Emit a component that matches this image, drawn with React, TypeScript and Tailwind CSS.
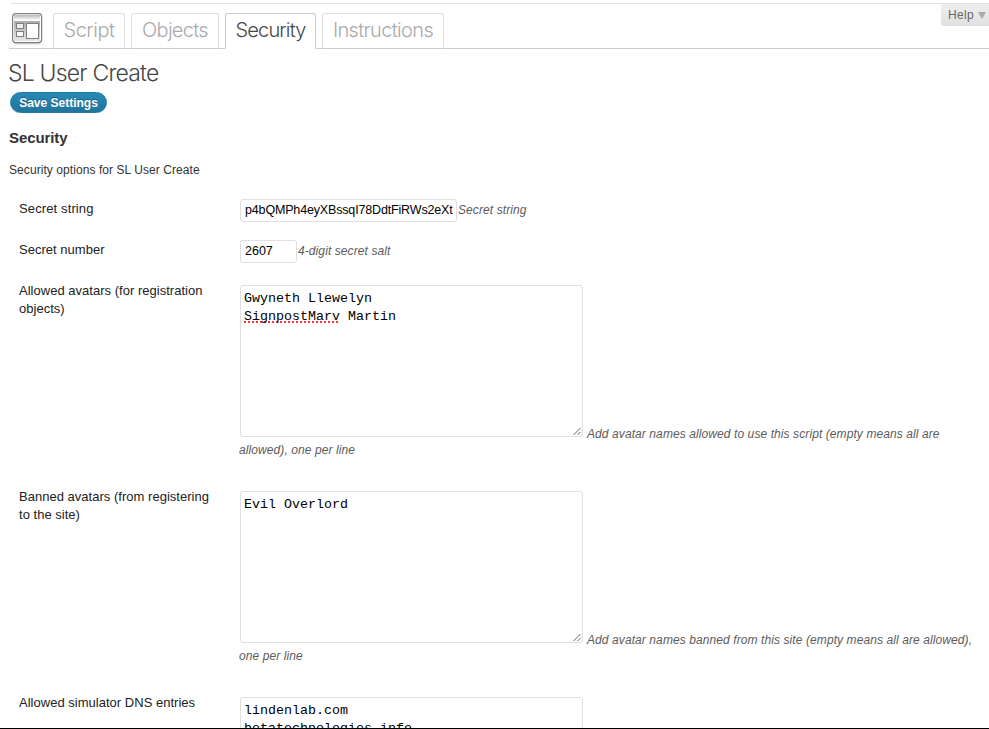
import type { ReactNode } from "react";

const light = "font-['Inter',sans-serif] font-light";

function Tab({ width, text, label, active = false }: { width: string; text: string; label: string; active?: boolean }) {
  return (
    <a
      className={`${light} ${width} ${text} relative flex h-[36px] shrink-0 justify-center whitespace-nowrap rounded-t-[3px] border pt-[3px] text-[20px] leading-[26px] ${
        active ? "border-[#ccc] border-b-white bg-white text-[#464646]" : "border-[#dfdfdf] border-b-[#ccc] text-[#aaa]"
      }`}
    >
      {label}
    </a>
  );
}

function LayoutIcon() {
  return (
    <svg width="32" height="34" viewBox="0 0 32 34" className="ml-[3px] mb-px shrink-0" fill="none">
      <defs>
        <linearGradient id="bar" x1="0" y1="0" x2="0" y2="1">
          <stop offset="0" stopColor="#b8b8b8" />
          <stop offset="1" stopColor="#fafafa" />
        </linearGradient>
        <linearGradient id="body" x1="0" y1="0" x2="0" y2="1">
          <stop offset="0" stopColor="#aaa" />
          <stop offset="1" stopColor="#e8e8e8" />
        </linearGradient>
      </defs>
      <path d="M2 30.5H28" stroke="#ddd" strokeWidth="2" />
      <rect x="0.6" y="0.6" width="29" height="29" rx="3" fill="#fff" stroke="#7d7d7d" strokeWidth="1.2" />
      <rect x="2" y="2" width="26" height="5" fill="url(#bar)" />
      <rect x="2" y="8" width="26" height="20" fill="url(#body)" />
      <rect x="4.5" y="10.5" width="7" height="5" fill="#eee" stroke="#808080" />
      <rect x="4.5" y="18.5" width="7" height="5" fill="#f8f8f8" stroke="#808080" />
      <rect x="14.5" y="10.5" width="12" height="15" fill="#fff" stroke="#808080" />
    </svg>
  );
}

function Row({ label, height, children }: { label: ReactNode; height: string; children: ReactNode }) {
  return (
    <div className={`flex ${height}`}>
      <div className="w-[230px] shrink-0 pl-[10px] pt-[2px] text-[13px] leading-[18px] tracking-[0.02px] text-[#222]">{label}</div>
      <div className="w-[750px] shrink-0">{children}</div>
    </div>
  );
}

const hint = "whitespace-nowrap text-[12px] italic leading-[16px] tracking-[0.09px] text-[#5c5c5c]";

function Area({ children }: { children?: ReactNode }) {
  return (
    <div className="relative h-[152px] w-[343px] shrink-0 overflow-hidden rounded-[3px] border border-[#dfdfdf] bg-white pl-[3px] pt-[4px] font-['Liberation_Mono',monospace] text-[13.333px] leading-[18px] text-black">
      {children}
      <svg width="9" height="9" viewBox="0 0 9 9" className="absolute bottom-0 right-0" stroke="#555" strokeWidth="0.9">
        <path d="M0.5 8L7.5 1M4.5 8L7.5 5" />
      </svg>
    </div>
  );
}

export default function App() {
  return (
    <div className="relative h-[729px] w-[989px] overflow-hidden bg-white font-['Liberation_Sans',Arial,sans-serif] text-[#333]">
      <div className="ml-[11px] mt-[3px] h-px bg-[#dfdfdf]" />
      <div className="absolute right-0 top-[4px] flex h-[22px] w-[48px] items-center rounded-bl-[3px] bg-gradient-to-b from-[#efefef] to-[#e0e0e0] pl-[7px] text-[12px] tracking-[0.3px] text-[#666]">
        Help
        <span className="ml-[4px] mt-px h-0 w-0 border-x-[4px] border-t-[7px] border-x-transparent border-t-[#aaa]" />
      </div>
      <div className="ml-[9px] flex h-[45px] items-end border-b border-[#ccc]">
        <LayoutIcon />
        <div className="-mb-px ml-[9px] flex">
          <Tab width="w-[72px]" text="tracking-[-0.5px]" label="Script" />
          <Tab width="ml-[6px] w-[88px]" text="tracking-[-0.7px]" label="Objects" />
          <Tab width="ml-[6px] w-[91px]" text="tracking-[-0.85px]" label="Security" active />
          <Tab width="ml-[6px] w-[122px]" text="tracking-[-0.65px]" label="Instructions" />
        </div>
      </div>
      <h2 className={`${light} ml-[8px] mt-[9px] text-[23px] leading-[30px] tracking-[-0.8px] text-[#464646]`}>SL User Create</h2>
      <button className="ml-[10px] mt-[4px] flex h-[21px] w-[97px] items-center justify-center rounded-full border border-[#2079a8] bg-gradient-to-b from-[#278ab7] to-[#21759b] text-[12px] font-bold text-white [text-shadow:0_-1px_0_rgba(0,0,0,0.3)]">
        Save Settings
      </button>
      <h3 className="ml-[9px] mt-[16px] text-[15px] font-bold leading-[18px] tracking-[-0.1px]">Security</h3>
      <p className="ml-[9px] mt-[15px] text-[12px] leading-[16px] tracking-[0.07px]">Security options for SL User Create</p>
      <div className="ml-[9px] mt-[20px]">
        <Row height="h-[41px]" label={<span className="tracking-[0.12px]">Secret string</span>}>
          <div className="flex">
            <div className="ml-[1px] mt-px flex h-[23px] w-[217px] items-center overflow-hidden whitespace-nowrap rounded-[3px] border border-[#dfdfdf] pl-[4px] text-[12.5px] tracking-[-0.16px] text-black">
              <span>p4bQMPh4eyXBssqI78DdtFiRWs2eXt</span>
            </div>
            <span className={`${hint} ml-[1px] mt-[4px]`}>Secret string</span>
          </div>
        </Row>
        <Row height="h-[41px]" label="Secret number">
          <div className="flex">
            <div className="ml-[1px] mt-px flex h-[23px] w-[57px] items-center rounded-[3px] border border-[#dfdfdf] pl-[4px] text-[12.5px] text-black">2607</div>
            <span className={`${hint} ml-[1px] mt-[4px]`}>4-digit secret salt</span>
          </div>
        </Row>
        <Row height="h-[206px]" label={<>Allowed avatars (for registration<br />objects)</>}>
          <div className="flex items-end pl-[1px] pt-[5px]">
            <Area>
              <div>Gwyneth Llewelyn</div>
              <div>
                <span className="underline decoration-[#f33] decoration-dotted decoration-[2px] underline-offset-[1px] [text-decoration-skip-ink:none]">SignpostMarv</span> Martin
              </div>
            </Area>
            <span className={`${hint} -mb-[5px] ml-[4px]`}>Add avatar names allowed to use this script (empty means all are</span>
          </div>
          <div className={`${hint} mt-[5px]`}>allowed), one per line</div>
        </Row>
        <Row height="h-[206px]" label={<>Banned avatars (from registering<br />to the site)</>}>
          <div className="flex items-end pl-[1px] pt-[5px]">
            <Area>Evil Overlord</Area>
            <span className={`${hint} -mb-[5px] ml-[4px]`}>Add avatar names banned from this site (empty means all are allowed),</span>
          </div>
          <div className={`${hint} mt-[5px]`}>one per line</div>
        </Row>
        <Row height="h-[160px]" label="Allowed simulator DNS entries">
          <div className="pl-[1px] pt-[5px]">
            <Area>
              <div>lindenlab.com</div>
              <div>betatechnologies.info</div>
            </Area>
          </div>
        </Row>
      </div>
      <div className="absolute inset-x-0 bottom-0 h-px bg-black" />
    </div>
  );
}
